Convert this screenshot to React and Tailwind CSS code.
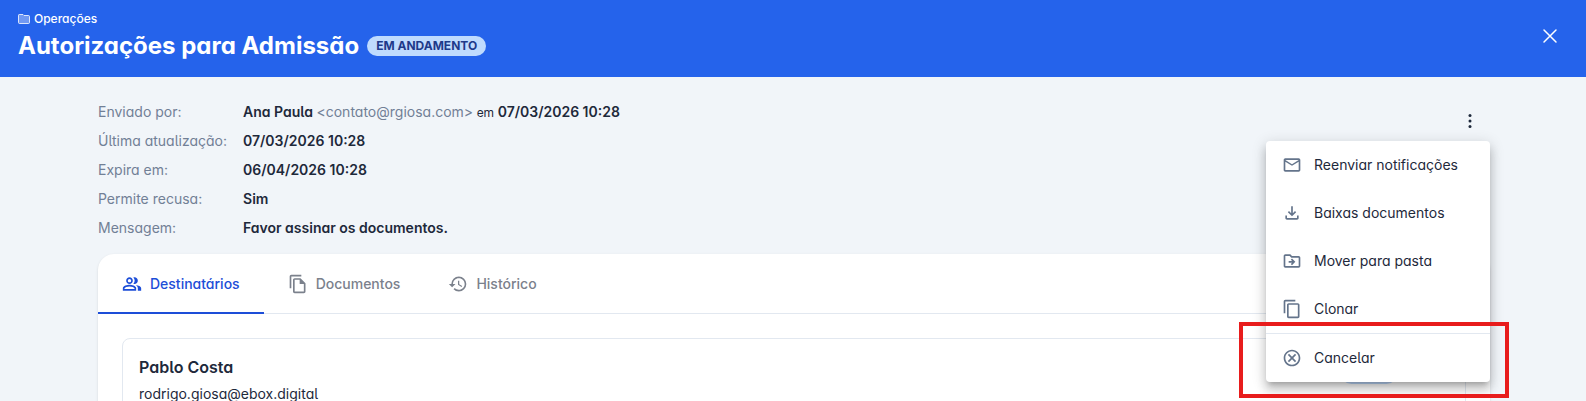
import {
  MdOutlinePeopleAlt,
  MdOutlineFileCopy,
  MdHistory,
  MdMailOutline,
  MdOutlineFileDownload,
  MdOutlineDriveFileMove,
  MdContentCopy,
  MdOutlineCancel,
} from 'react-icons/md'
import { HiOutlineXMark } from 'react-icons/hi2'

const TABS = [
  { label: 'Destinatários', icon: MdOutlinePeopleAlt, active: true },
  { label: 'Documentos', icon: MdOutlineFileCopy },
  { label: 'Histórico', icon: MdHistory },
]

const MENU = [
  { label: 'Reenviar notificações', icon: MdMailOutline },
  { label: 'Baixas documentos', icon: MdOutlineFileDownload },
  { label: 'Mover para pasta', icon: MdOutlineDriveFileMove },
  { label: 'Clonar', icon: MdContentCopy },
]

const DETAILS = [
  {
    label: 'Enviado por:',
    value: (
      <>
        Ana Paula <span className="font-normal text-[#718096]">&lt;contato@rgiosa.com&gt;</span>{' '}
        <span className="text-xs font-normal">em</span> 07/03/2026 10:28
      </>
    ),
  },
  { label: 'Última atualização:', value: '07/03/2026 10:28' },
  { label: 'Expira em:', value: '06/04/2026 10:28' },
  { label: 'Permite recusa:', value: 'Sim' },
  { label: 'Mensagem:', value: 'Favor assinar os documentos.' },
]

function FolderIcon() {
  return (
    <svg width="12" height="10" viewBox="0 0 12 10" aria-hidden="true">
      <path
        d="M.5 1.2V8.6c0 .5.4.9.9.9h9.2c.5 0 .9-.4.9-.9V2.4c0-.5-.4-.9-.9-.9H6L5 .5H1.2c-.4 0-.7.3-.7.7z"
        fill="white"
        fillOpacity=".35"
        stroke="white"
        strokeOpacity=".8"
      />
    </svg>
  )
}

function KebabIcon() {
  return (
    <svg width="20" height="20" viewBox="0 0 20 20" fill="currentColor" aria-hidden="true">
      <circle cx="10" cy="4.5" r="1.5" />
      <circle cx="10" cy="10" r="1.5" />
      <circle cx="10" cy="15.5" r="1.5" />
    </svg>
  )
}

function MenuItem({ icon: Icon, label }) {
  return (
    <button
      type="button"
      role="menuitem"
      className="flex h-12 w-full items-center gap-3 px-4 text-left text-sm text-[#1e293b]"
    >
      <Icon size={20} className="shrink-0 text-[#64748b]" />
      {label}
    </button>
  )
}

function Header() {
  return (
    <header className="flex items-center justify-between bg-[#2563eb] pt-2.5 pr-6 pb-[15px] pl-[18px] text-white">
      <div>
        <a href="#operacoes" className="flex items-center gap-1 text-xs leading-[17px] font-medium">
          <FolderIcon />
          Operações
        </a>
        <div className="mt-[3px] flex items-center gap-2">
          <h1 className="text-2xl font-bold">Autorizações para Admissão</h1>
          <span className="rounded-full bg-[#bfdbfe] px-[9px] text-xs leading-5 font-bold text-[#1e3a8a]">
            EM ANDAMENTO
          </span>
        </div>
      </div>
      <button type="button" aria-label="Fechar">
        <HiOutlineXMark size={24} />
      </button>
    </header>
  )
}

// Kebab button with its menu open; the frame marks the cancel entry.
function ActionsMenu() {
  return (
    <div className="relative pt-1">
      <button type="button" aria-label="Mais ações" className="grid size-10 place-items-center text-[#1e293b]">
        <KebabIcon />
      </button>
      <div
        role="menu"
        className="absolute top-full right-0 z-10 w-56 rounded bg-white shadow-[0_5px_5px_-3px_rgba(0,0,0,0.2),0_8px_10px_1px_rgba(0,0,0,0.14),0_3px_14px_2px_rgba(0,0,0,0.12)]"
      >
        {MENU.map((item) => (
          <MenuItem key={item.label} {...item} />
        ))}
        <div className="relative border-t border-[#e2e8f0]">
          <MenuItem icon={MdOutlineCancel} label="Cancelar" />
          <div className="pointer-events-none absolute -top-3 -right-[19px] -bottom-4 -left-[27px] border-4 border-[#e81c1c]" />
        </div>
      </div>
    </div>
  )
}

export default function App() {
  return (
    <div className="h-screen overflow-hidden bg-[#f1f5f9] font-['Inter',sans-serif] text-[#1e293b] [font-feature-settings:'cv11','cv05']">
      <Header />
      <main className="pr-24 pl-[98px]">
        <div className="flex items-start justify-between pt-5">
          <dl className="mb-3 grid grid-cols-[auto_1fr] gap-x-4 text-sm leading-[29px]">
            {DETAILS.map((d) => (
              <div key={d.label} className="col-span-2 grid grid-cols-subgrid">
                <dt className="text-[#718096]">{d.label}</dt>
                <dd className="font-semibold">{d.value}</dd>
              </div>
            ))}
          </dl>
          <ActionsMenu />
        </div>

        <section className="rounded-2xl bg-white shadow-sm">
          <div role="tablist" className="flex h-[60px] border-b border-[#e2e8f0]">
            {TABS.map(({ label, icon: Icon, active }) => (
              <button
                key={label}
                type="button"
                role="tab"
                aria-selected={!!active}
                className={
                  active
                    ? 'flex h-[60px] items-center gap-2 border-b-2 border-[#1d4ed8] px-6 pt-0.5 text-sm font-medium text-[#1d4ed8]'
                    : 'flex h-[60px] items-center gap-2 border-b-2 border-transparent px-6 pt-0.5 text-sm font-medium text-[#7b818c]'
                }
              >
                <Icon size={20} />
                {label}
              </button>
            ))}
          </div>
          <div className="p-6">
            <div className="flex justify-between rounded-lg border border-[#e2e8f0] p-4">
              <div>
                <h2 className="font-semibold">Pablo Costa</h2>
                <p className="mt-1 text-sm leading-[22px]">rodrigo.giosa@ebox.digital</p>
              </div>
              <span aria-hidden="true" className="mt-2 mr-[52px] h-[21px] w-14 rounded-full bg-[#bfdbfe]" />
            </div>
          </div>
        </section>
      </main>
    </div>
  )
}
